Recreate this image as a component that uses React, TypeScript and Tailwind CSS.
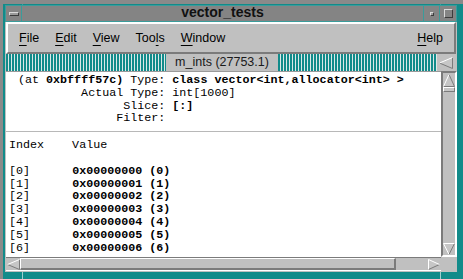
import React from "react";

const rows = [0, 1, 2, 3, 4, 5, 6];

function MenuItem({ pre = "", u, post = "", className = "" }: { pre?: string; u: string; post?: string; className?: string }) {
  return (
    <span className={`px-2 ${className}`}>
      {pre}
      <span className="underline decoration-1 underline-offset-[3px]">{u}</span>
      {post}
    </span>
  );
}

function UpArrow() {
  return (
    <svg width="12" height="13" viewBox="0 0 12 13">
      <polygon points="6,0.5 11.5,12.5 0.5,12.5" fill="#c6c6c6" />
      <polyline points="6,0.5 11.5,12.5 0.5,12.5" fill="none" stroke="#7b7b7b" />
      <polyline points="0.5,12.5 6,0.5" fill="none" stroke="#ffffff" />
    </svg>
  );
}

function DownArrow() {
  return (
    <svg width="12" height="12" viewBox="0 0 12 12">
      <polygon points="0.5,0.5 11.5,0.5 6,11.5" fill="#c6c6c6" />
      <polyline points="11.5,0.5 6,11.5" fill="none" stroke="#7b7b7b" />
      <polyline points="6,11.5 0.5,0.5 11.5,0.5" fill="none" stroke="#ffffff" />
    </svg>
  );
}

function LeftArrow({ w = 13, h = 11 }: { w?: number; h?: number }) {
  const m = h / 2;
  return (
    <svg width={w} height={h} viewBox={`0 0 ${w} ${h}`}>
      <polygon points={`0.5,${m} ${w - 0.5},0.5 ${w - 0.5},${h - 0.5}`} fill="#c6c6c6" />
      <polyline points={`0.5,${m} ${w - 0.5},${h - 0.5} ${w - 0.5},0.5`} fill="none" stroke="#7b7b7b" />
      <polyline points={`0.5,${m} ${w - 0.5},0.5`} fill="none" stroke="#ffffff" />
    </svg>
  );
}

function RightArrow() {
  return (
    <svg width="12" height="11" viewBox="0 0 12 11">
      <polygon points="0.5,0.5 11.5,5.5 0.5,10.5" fill="#c6c6c6" />
      <polyline points="0.5,10.5 11.5,5.5" fill="none" stroke="#7b7b7b" />
      <polyline points="11.5,5.5 0.5,0.5 0.5,10.5" fill="none" stroke="#ffffff" />
    </svg>
  );
}

export default function App() {
  return (
    <div className="relative h-[279px] w-[463px] overflow-hidden border-l-[3px] border-t-[4px] border-[#8a8a8a] bg-[#128b8a] pb-[7px] pl-[2px] pr-[6px] pt-[1px]">
      {/* frame corner marks */}
      <div className="absolute left-[19px] top-[-4px] h-[5px] w-px bg-[#2fa3a2]" />
      <div className="absolute left-[437px] top-[-4px] h-[5px] w-px bg-[#2fa3a2]" />
      <div className="absolute bottom-0 left-[19px] h-[7px] w-px bg-[#9fcfcf]" />
      <div className="absolute bottom-0 left-[437px] h-[7px] w-px bg-[#9fcfcf]" />

      <div className="flex h-full flex-col">
        {/* title bar */}
        <div className="flex h-[17px] shrink-0 bg-[#848484]">
          <div className="flex w-[17px] items-center justify-center border border-[#3a9c9b]">
            <div className="h-[4px] w-[10px] border border-b-[#3c3c3c] border-l-[#dadada] border-r-[#3c3c3c] border-t-[#dadada] bg-[#9a9a9a]" />
          </div>
          <div className="flex flex-1 items-center justify-center border-y border-[#3a9c9b] pb-[3px] font-['Liberation_Sans',Arial,sans-serif] text-[14px] font-bold text-[#111]">
            vector_tests
          </div>
          <div className="flex w-[17px] items-center justify-center border border-[#3a9c9b]">
            <div className="h-[4px] w-[4px] border border-b-[#3c3c3c] border-l-[#dadada] border-r-[#3c3c3c] border-t-[#dadada] bg-[#9a9a9a]" />
          </div>
          <div className="flex w-[17px] items-center justify-center border-y border-r border-[#3a9c9b]">
            <div className="h-[9px] w-[9px] border border-b-[#3c3c3c] border-l-[#dadada] border-r-[#3c3c3c] border-t-[#dadada]" />
          </div>
        </div>

        {/* client */}
        <div className="flex flex-1 flex-col bg-[#c0c0c0]">
          <div className="mx-px flex h-[32px] shrink-0 items-center border-2 border-b-[#7b7b7b] border-l-white border-r-[#7b7b7b] border-t-white px-[3px] font-['Liberation_Sans',Arial,sans-serif] text-[12.5px] text-black">
            <MenuItem u="F" post="ile" />
            <MenuItem u="E" post="dit" />
            <MenuItem u="V" post="iew" />
            <MenuItem pre="Too" u="l" post="s" />
            <MenuItem u="W" post="indow" />
            <MenuItem u="H" post="elp" className="ml-auto" />
          </div>

          {/* tab band */}
          <div className="ml-px flex h-[17px] shrink-0">
            <div className="w-[160px] bg-[repeating-linear-gradient(90deg,#128b8a_0_2px,#dce8e8_2px_3px)]" />
            <div className="flex w-[112px] items-center justify-center font-['Liberation_Sans',Arial,sans-serif] text-[12.5px] text-[#1a1a1a]">
              m_ints (27753.1)
            </div>
            <div className="w-[159px] bg-[repeating-linear-gradient(90deg,#128b8a_0_2px,#dce8e8_2px_3px)]" />
            <div className="flex flex-1 items-center justify-center pr-[2px]">
              <LeftArrow w={14} h={12} />
            </div>
          </div>

          {/* main */}
          <div className="ml-px flex min-h-0 flex-1">
            <div className="flex-1 border-t border-[#9a9a9a] bg-white font-['Liberation_Mono',monospace] text-[11.7px] leading-[12.8px] text-black">
              <div className="whitespace-pre pl-[12px] pt-[2px]">
                <div>
                  (at <b>0xbffff57c)</b> Type: <b>class vector&lt;int,allocator&lt;int&gt; &gt;</b>
                </div>
                <div>{"         Actual Type: int[1000]"}</div>
                <div>
                  {"               Slice: "}
                  <b>[:]</b>
                </div>
                <div>{"              Filter:"}</div>
              </div>
              <div className="mt-[6px] h-px bg-[#b8b8b8]" />
              <div className="whitespace-pre pl-[3px] pt-[7px]">
                <div>{"Index    Value"}</div>
                <div>&nbsp;</div>
                {rows.map((i) => (
                  <div key={i}>
                    {`[${i}]      `}
                    <b>{`0x0000000${i} (${i})`}</b>
                  </div>
                ))}
              </div>
            </div>
            <div className="flex w-[16px] flex-col items-center border-2 border-b-white border-l-[#7b7b7b] border-r-white border-t-[#7b7b7b] pt-px">
              <UpArrow />
              <div className="h-[5px] w-[12px] border border-b-[#7b7b7b] border-l-white border-r-[#7b7b7b] border-t-white bg-[#c6c6c6]" />
              <div className="flex-1" />
              <DownArrow />
            </div>
          </div>

          {/* bottom scrollbar row */}
          <div className="ml-px flex h-[15px] shrink-0">
            <div className="flex flex-1 flex-col">
              <div className="h-px bg-[#7b7b7b]" />
              <div className="flex h-[12px] items-center">
                <div className="flex w-[14px] justify-center">
                  <LeftArrow />
                </div>
                <div className="h-[12px] w-[376px] border border-b-2 border-r-2 border-b-[#7b7b7b] border-l-white border-r-[#7b7b7b] border-t-white" />
                <div className="flex-1" />
                <RightArrow />
                <div className="w-px" />
              </div>
              <div className="h-px bg-white" />
            </div>
            <div className="w-[16px]" />
          </div>
        </div>
      </div>
    </div>
  );
}
